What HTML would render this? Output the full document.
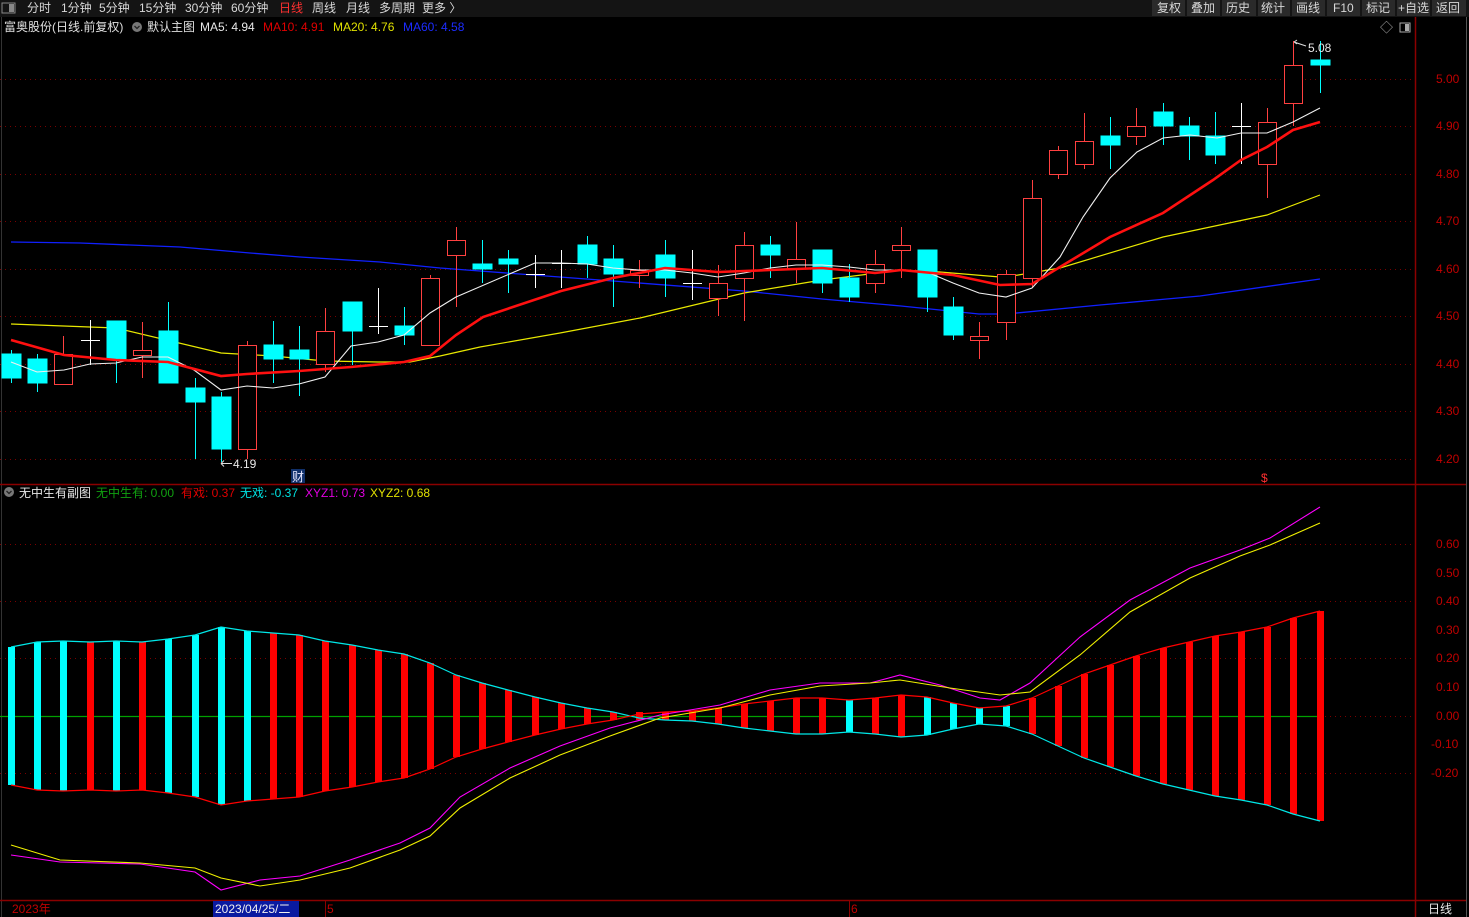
<!DOCTYPE html>
<html><head><meta charset="utf-8">
<style>
html,body{margin:0;padding:0;background:#000;overflow:hidden}
svg{display:block;font-family:"Liberation Sans","Noto Sans CJK SC",sans-serif}
</style></head><body>
<svg width="1469" height="917" viewBox="0 0 1469 917" xmlns="http://www.w3.org/2000/svg">
<rect width="1469" height="917" fill="#000"/>
<!-- toolbar -->
<rect x="0" y="0" width="1469" height="17" fill="#141414"/>
<g fill="#2a2a2a">
<rect x="1152" y="0" width="33" height="16"/><rect x="1187" y="0" width="33" height="16"/><rect x="1222" y="0" width="34" height="16"/><rect x="1258" y="0" width="32" height="16"/><rect x="1292" y="0" width="33" height="16"/><rect x="1327" y="0" width="33" height="16"/><rect x="1362" y="0" width="33" height="16"/><rect x="1397" y="0" width="33" height="16"/><rect x="1432" y="0" width="34" height="16"/>
</g>
<rect x="2" y="3" width="13" height="10" fill="none" stroke="#888" stroke-width="1"/>
<rect x="9" y="4" width="5" height="8" fill="#888"/>
<g font-size="12" fill="#d8d8d8">
<text x="27" y="12">分时</text><text x="61" y="12">1分钟</text><text x="99" y="12">5分钟</text><text x="139" y="12">15分钟</text><text x="185" y="12">30分钟</text><text x="231" y="12">60分钟</text>
<text x="279" y="12" fill="#ff3030">日线</text><text x="312" y="12">周线</text><text x="346" y="12">月线</text><text x="379" y="12">多周期</text><text x="422" y="12">更多 〉</text>
<text x="1157" y="12">复权</text><text x="1191" y="12">叠加</text><text x="1226" y="12">历史</text><text x="1261" y="12">统计</text><text x="1296" y="12">画线</text><text x="1333" y="12">F10</text><text x="1366" y="12">标记</text><text x="1398" y="12">+自选</text><text x="1436" y="12">返回</text>
</g>
<!-- frame -->
<line x1="1.5" y1="17" x2="1.5" y2="917" stroke="#333"/>
<line x1="1415.5" y1="17" x2="1415.5" y2="917" stroke="#8b0000" stroke-width="1.5"/>
<line x1="1466.5" y1="17" x2="1466.5" y2="917" stroke="#555"/>
<line x1="0" y1="484.5" x2="1466" y2="484.5" stroke="#8b0000" stroke-width="1.5"/>
<line x1="0" y1="900.5" x2="1466" y2="900.5" stroke="#8b0000" stroke-width="1.5"/>
<!-- grids main -->
<g stroke="#7a0000" stroke-dasharray="1,4">
<line x1="0" y1="79.5" x2="1412" y2="79.5"/><line x1="0" y1="126.5" x2="1412" y2="126.5"/><line x1="0" y1="174.5" x2="1412" y2="174.5"/><line x1="0" y1="221.5" x2="1412" y2="221.5"/><line x1="0" y1="269.5" x2="1412" y2="269.5"/><line x1="0" y1="316.5" x2="1412" y2="316.5"/><line x1="0" y1="364.5" x2="1412" y2="364.5"/><line x1="0" y1="411.5" x2="1412" y2="411.5"/><line x1="0" y1="459.5" x2="1412" y2="459.5"/>
<line x1="0" y1="544.5" x2="1412" y2="544.5"/><line x1="0" y1="601.5" x2="1412" y2="601.5"/><line x1="0" y1="658.5" x2="1412" y2="658.5"/><line x1="0" y1="716.5" x2="1412" y2="716.5"/><line x1="0" y1="773.5" x2="1412" y2="773.5"/>
</g>
<g font-size="12" fill="#c00000">
<text x="1436" y="83">5.00</text><text x="1436" y="130">4.90</text><text x="1436" y="178">4.80</text><text x="1436" y="225">4.70</text><text x="1436" y="273">4.60</text><text x="1436" y="320">4.50</text><text x="1436" y="368">4.40</text><text x="1436" y="415">4.30</text><text x="1436" y="463">4.20</text>
<text x="1436" y="548">0.60</text><text x="1436" y="577">0.50</text><text x="1436" y="605">0.40</text><text x="1436" y="634">0.30</text><text x="1436" y="662">0.20</text><text x="1436" y="691">0.10</text><text x="1436" y="720">0.00</text><text x="1431" y="748">-0.10</text><text x="1431" y="777">-0.20</text>
</g>
<!-- title -->
<g font-size="12">
<text x="4" y="31" fill="#e0e0e0">富奥股份(日线.前复权)</text>
<circle cx="137" cy="27" r="5" fill="#777"/><path d="M134.5 26 L137 28.5 L139.5 26" stroke="#222" stroke-width="1.3" fill="none"/>
<text x="147" y="31" fill="#e0e0e0">默认主图</text>
<text x="200" y="31" fill="#e8e8e8">MA5: 4.94</text>
<text x="263" y="31" fill="#e00000">MA10: 4.91</text>
<text x="333" y="31" fill="#e0e000">MA20: 4.76</text>
<text x="403" y="31" fill="#1c2cff">MA60: 4.58</text>
<text x="1380" y="32" fill="#aaa" font-size="13">◇</text>
<rect x="1400" y="23" width="10" height="9" fill="none" stroke="#aaa"/><rect x="1405" y="24" width="4" height="7" fill="#aaa"/>
</g>
<!-- MA60 -->
<polyline fill="none" stroke="#1020ff" stroke-width="1.3" points="11,242 80,243 130,245 180,247 250,253 300,257 380,262 440,268 480,271 613,281 744,291 822,299 901,306 979,314 1006,314 1100,305 1200,296 1320,279"/>
<!-- MA20 -->
<polyline fill="none" stroke="#e8e800" stroke-width="1.2" points="11,324 116,328 221,353 273,356 325,361 378,362 410,362 440,356 480,347 560,333 640,318 744,293 822,280 901,270 940,272 1000,277 1006,277 1060,268 1163,237 1267,215 1320,195"/>
<!-- candles -->
<g stroke-width="1">
<g stroke="#00ffff" fill="#00ffff">
<line x1="11.5" y1="350" x2="11.5" y2="383"/><rect x="2" y="354" width="19" height="24"/>
<line x1="37.5" y1="354" x2="37.5" y2="392"/><rect x="28" y="359" width="19" height="24"/>
<line x1="116.5" y1="321" x2="116.5" y2="383"/><rect x="107" y="321" width="19" height="38"/>
<line x1="168.5" y1="302" x2="168.5" y2="383"/><rect x="159" y="331" width="19" height="52"/>
<line x1="195.5" y1="378" x2="195.5" y2="459"/><rect x="186" y="388" width="19" height="14"/>
<line x1="221.5" y1="392" x2="221.5" y2="462"/><rect x="212" y="397" width="19" height="52"/>
<line x1="273.5" y1="321" x2="273.5" y2="383"/><rect x="264" y="345" width="19" height="14"/>
<line x1="299.5" y1="326" x2="299.5" y2="396"/><rect x="290" y="350" width="19" height="9"/>
<line x1="352.5" y1="302" x2="352.5" y2="365"/><rect x="343" y="302" width="19" height="29"/>
<line x1="404.5" y1="307" x2="404.5" y2="345"/><rect x="395" y="326" width="19" height="9"/>
<line x1="482.5" y1="240" x2="482.5" y2="283"/><rect x="473" y="264" width="19" height="5"/>
<line x1="508.5" y1="250" x2="508.5" y2="293"/><rect x="499" y="259" width="19" height="5"/>
<line x1="587.5" y1="236" x2="587.5" y2="278"/><rect x="578" y="245" width="19" height="19"/>
<line x1="613.5" y1="245" x2="613.5" y2="307"/><rect x="604" y="259" width="19" height="15"/>
<line x1="665.5" y1="240" x2="665.5" y2="297"/><rect x="656" y="255" width="19" height="23"/>
<line x1="770.5" y1="236" x2="770.5" y2="278"/><rect x="761" y="245" width="19" height="10"/>
<line x1="822.5" y1="250" x2="822.5" y2="293"/><rect x="813" y="250" width="19" height="33"/>
<line x1="849.5" y1="264" x2="849.5" y2="302"/><rect x="840" y="278" width="19" height="19"/>
<line x1="927.5" y1="250" x2="927.5" y2="312"/><rect x="918" y="250" width="19" height="47"/>
<line x1="953.5" y1="297" x2="953.5" y2="340"/><rect x="944" y="307" width="19" height="28"/>
<line x1="1110.5" y1="117" x2="1110.5" y2="169"/><rect x="1101" y="136" width="19" height="9"/>
<line x1="1163.5" y1="103" x2="1163.5" y2="145"/><rect x="1154" y="112" width="19" height="14"/>
<line x1="1189.5" y1="117" x2="1189.5" y2="160"/><rect x="1180" y="126" width="19" height="10"/>
<line x1="1215.5" y1="112" x2="1215.5" y2="164"/><rect x="1206" y="136" width="19" height="19"/>
<line x1="1320.5" y1="41" x2="1320.5" y2="93"/><rect x="1311" y="60" width="19" height="5"/>
</g>
<g stroke="#ff4040" fill="#000">
<line x1="63.5" y1="336" x2="63.5" y2="384"/><rect x="54.5" y="354.5" width="18" height="30"/>
<line x1="142.5" y1="322" x2="142.5" y2="378"/><rect x="133.5" y="350.5" width="18" height="5"/>
<line x1="247.5" y1="341" x2="247.5" y2="459"/><rect x="238.5" y="345.5" width="18" height="104"/>
<line x1="325.5" y1="308" x2="325.5" y2="372"/><rect x="316.5" y="331.5" width="18" height="33"/>
<line x1="430.5" y1="275" x2="430.5" y2="345"/><rect x="421.5" y="278.5" width="18" height="67"/>
<line x1="456.5" y1="227" x2="456.5" y2="307"/><rect x="447.5" y="240.5" width="18" height="15"/>
<line x1="639.5" y1="260" x2="639.5" y2="288"/><rect x="630.5" y="270.5" width="18" height="5"/>
<line x1="718.5" y1="265" x2="718.5" y2="316"/><rect x="709.5" y="283.5" width="18" height="15"/>
<line x1="744.5" y1="232" x2="744.5" y2="321"/><rect x="735.5" y="245.5" width="18" height="33"/>
<line x1="796.5" y1="222" x2="796.5" y2="283"/><rect x="787.5" y="259.5" width="18" height="9"/>
<line x1="875.5" y1="250" x2="875.5" y2="293"/><rect x="866.5" y="264.5" width="18" height="19"/>
<line x1="901.5" y1="227" x2="901.5" y2="278"/><rect x="892.5" y="245.5" width="18" height="5"/>
<line x1="979.5" y1="322" x2="979.5" y2="359"/><rect x="970.5" y="336.5" width="18" height="4"/>
<line x1="1006.5" y1="270" x2="1006.5" y2="340"/><rect x="997.5" y="274.5" width="18" height="48"/>
<line x1="1032.5" y1="180" x2="1032.5" y2="287"/><rect x="1023.5" y="198.5" width="18" height="80"/>
<line x1="1058.5" y1="146" x2="1058.5" y2="179"/><rect x="1049.5" y="150.5" width="18" height="24"/>
<line x1="1084.5" y1="113" x2="1084.5" y2="169"/><rect x="1075.5" y="141.5" width="18" height="23"/>
<line x1="1136.5" y1="108" x2="1136.5" y2="145"/><rect x="1127.5" y="126.5" width="18" height="10"/>
<line x1="1267.5" y1="108" x2="1267.5" y2="198"/><rect x="1258.5" y="122.5" width="18" height="42"/>
<line x1="1293.5" y1="41" x2="1293.5" y2="126"/><rect x="1284.5" y="65.5" width="18" height="38"/>
</g>
<g stroke="#fff">
<line x1="90.5" y1="320" x2="90.5" y2="365"/><line x1="81" y1="340.5" x2="100" y2="340.5"/>
<line x1="378.5" y1="288" x2="378.5" y2="334"/><line x1="369" y1="326.5" x2="388" y2="326.5"/>
<line x1="535.5" y1="255" x2="535.5" y2="288"/><line x1="526" y1="274.5" x2="545" y2="274.5"/>
<line x1="561.5" y1="250" x2="561.5" y2="288"/><line x1="552" y1="263.5" x2="571" y2="263.5"/>
<line x1="692.5" y1="250" x2="692.5" y2="300"/><line x1="683" y1="283.5" x2="702" y2="283.5"/>
<line x1="1241.5" y1="103" x2="1241.5" y2="164"/><line x1="1232" y1="126.5" x2="1251" y2="126.5"/>
</g>
</g>
<!-- MA5 -->
<polyline fill="none" stroke="#f0f0f0" stroke-width="1.1" points="11,362 37,372 64,370 90,364 116,363 142,357 168,357 194,370 221,390 247,386 273,388 299,384 325,377 351,346 378,342 404,335 430,313 456,297 535,263 561,263 587,264 613,268 639,270 665,270 692,273 718,277 744,273 770,268 796,265 822,265 849,267 875,270 901,270 927,272 953,283 979,293 1006,297 1032,288 1060,257 1083,217 1110,178 1137,152 1163,138 1190,135 1217,138 1241,133 1267,133 1293,122 1320,108"/>
<!-- MA10 -->
<polyline fill="none" stroke="#ff1010" stroke-width="2.6" points="11,340 64,355 116,360 168,362 221,376 247,374 299,371 351,367 404,362 430,356 456,335 483,317 561,291 613,278 665,268 718,272 770,270 822,268 875,273 901,270 953,275 1000,285 1032,284 1060,267 1110,237 1163,213 1213,180 1241,160 1267,147 1293,130 1320,122"/>
<!-- annotations -->
<g font-size="12" fill="#e8e8e8">
<text x="233" y="468">4.19</text><path d="M221 463.5 H232 M221 463.5 l3 -3 M221 463.5 l3 3" stroke="#ddd" fill="none"/>
<text x="1308" y="52">5.08</text><path d="M1294 42 L1306 46 M1294 42 l3 -2 M1294 42 l3 2" stroke="#ddd" fill="none"/>
<rect x="291" y="469" width="14" height="14" fill="#10306a"/><text x="292" y="481" fill="#e8e8ff">财</text>
<text x="1261" y="482" fill="#ff3030" font-size="12">$</text>
</g>
<!-- sub title -->
<g font-size="12">
<circle cx="9" cy="492" r="5" fill="#777"/><path d="M6.5 491 L9 493.5 L11.5 491" stroke="#222" stroke-width="1.3" fill="none"/>
<text x="19" y="497" fill="#e8e8e8">无中生有副图</text>
<text x="96" y="497" fill="#10a010">无中生有: 0.00</text>
<text x="181" y="497" fill="#e00000">有戏: 0.37</text>
<text x="240" y="497" fill="#00e0e0">无戏: -0.37</text>
<text x="305" y="497" fill="#e000e0">XYZ1: 0.73</text>
<text x="370" y="497" fill="#e0e000">XYZ2: 0.68</text>
</g>
<!-- zero line -->
<line x1="0" y1="716.5" x2="1320" y2="716.5" stroke="#00a000" stroke-width="1.3"/>
<!-- bars -->
<g fill="#ff0000">
<rect x="87" y="642" width="7" height="148"/><rect x="139" y="642" width="7" height="148"/>
<rect x="270" y="633" width="7" height="166"/><rect x="296" y="635" width="7" height="162"/><rect x="322" y="641" width="7" height="150"/><rect x="349" y="645" width="7" height="142"/><rect x="375" y="650" width="7" height="132"/><rect x="401" y="654" width="7" height="124"/><rect x="427" y="663" width="7" height="106"/><rect x="453" y="675" width="7" height="82"/><rect x="479" y="683" width="7" height="66"/><rect x="505" y="690" width="7" height="52"/><rect x="532" y="697" width="7" height="38"/><rect x="558" y="703" width="7" height="26"/><rect x="584" y="708" width="7" height="16"/><rect x="610" y="712" width="7" height="8"/><rect x="636" y="712" width="7" height="8"/><rect x="662" y="712" width="7" height="8"/><rect x="689" y="711" width="7" height="10"/><rect x="715" y="708" width="7" height="16"/><rect x="741" y="704" width="7" height="24"/><rect x="767" y="701" width="7" height="30"/><rect x="793" y="698" width="7" height="36"/><rect x="819" y="698" width="7" height="36"/><rect x="872" y="698" width="7" height="36"/><rect x="898" y="695" width="7" height="42"/>
<rect x="1029" y="698" width="7" height="36"/><rect x="1055" y="686" width="7" height="60"/><rect x="1081" y="674" width="7" height="84"/><rect x="1107" y="665" width="7" height="102"/><rect x="1133" y="656" width="7" height="120"/><rect x="1160" y="648" width="7" height="136"/><rect x="1186" y="642" width="7" height="148"/><rect x="1212" y="636" width="7" height="160"/><rect x="1238" y="632" width="7" height="168"/><rect x="1264" y="627" width="7" height="178"/><rect x="1290" y="618" width="7" height="196"/><rect x="1317" y="611" width="7" height="210"/>
</g>
<g fill="#00ffff">
<rect x="8" y="647" width="7" height="138"/><rect x="34" y="642" width="7" height="148"/><rect x="60" y="641" width="7" height="150"/><rect x="113" y="641" width="7" height="150"/><rect x="165" y="639" width="7" height="154"/><rect x="192" y="635" width="7" height="162"/><rect x="218" y="627" width="7" height="178"/><rect x="244" y="631" width="7" height="170"/>
<rect x="846" y="700" width="7" height="32"/><rect x="924" y="697" width="7" height="38"/><rect x="950" y="703" width="7" height="26"/><rect x="976" y="708" width="7" height="16"/><rect x="1003" y="706" width="7" height="20"/>
</g>
<polyline fill="none" stroke="#00e8e8" stroke-width="1.2" points="11,647 37,642 63,641 90,642 116,641 142,642 168,639 195,635 221,627 247,631 273,633 299,635 325,641 352,645 378,650 404,654 430,663 456,675 482,683 508,690 535,697 561,703 587,708 613,712 639,718 665,720 692,721 718,724 744,728 770,731 796,734 822,734 849,732 875,734 901,737 927,735 953,729 979,724 1006,726 1032,734 1058,746 1084,758 1110,767 1136,776 1163,784 1189,790 1215,796 1241,800 1267,805 1293,814 1320,821"/>
<polyline fill="none" stroke="#ff0000" stroke-width="1.2" points="11,785 37,790 63,791 90,790 116,791 142,790 168,793 195,797 221,805 247,801 273,799 299,797 325,791 352,787 378,782 404,778 430,769 456,757 482,749 508,742 535,735 561,729 587,724 613,720 639,714 665,712 692,711 718,708 744,704 770,701 796,698 822,698 849,700 875,698 901,695 927,697 953,703 979,708 1006,706 1032,698 1058,686 1084,674 1110,665 1136,656 1163,648 1189,642 1215,636 1241,632 1267,627 1293,618 1320,611"/>
<polyline fill="none" stroke="#ff00ff" stroke-width="1.1" points="11,855 60,862 140,864 195,872 221,890 260,880 300,876 350,860 400,843 430,828 460,797 510,768 560,746 610,728 660,715 720,705 770,690 820,683 870,683 900,675 940,685 980,698 1000,700 1030,683 1080,637 1130,600 1190,568 1240,550 1270,538 1320,507"/>
<polyline fill="none" stroke="#f0f000" stroke-width="1.1" points="11,845 60,860 140,863 195,868 221,878 260,886 300,880 350,868 400,850 430,836 460,808 510,778 560,755 610,736 660,718 720,708 770,695 820,686 870,683 900,680 950,688 1000,695 1030,692 1080,655 1130,612 1190,578 1240,556 1270,545 1320,523"/>
<!-- date bar -->
<g font-size="12">
<text x="12" y="913" fill="#c00000">2023年</text>
<rect x="213" y="901" width="86" height="16" fill="#0a1aa0"/><text x="215" y="913" fill="#f0f0f0">2023/04/25/二</text>
<line x1="325.5" y1="901" x2="325.5" y2="917" stroke="#8b0000"/><text x="327" y="913" fill="#c00000">5</text>
<line x1="849.5" y1="901" x2="849.5" y2="917" stroke="#8b0000"/><text x="851" y="913" fill="#c00000">6</text>
<text x="1428" y="913" fill="#e8e8e8">日线</text>
</g>
</svg>
</body></html>
